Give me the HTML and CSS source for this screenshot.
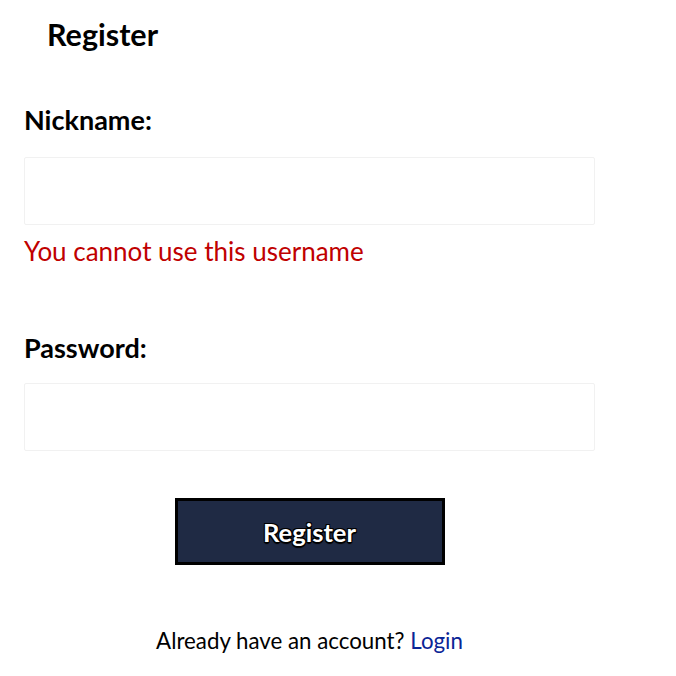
FILE: index.html
```html
<!DOCTYPE html>
<html>
<head>
<meta charset="utf-8">
<link rel="stylesheet" href="styles.css">
</head>
<body>
<div class="page">
  <h1 class="title">Register</h1>
  <form class="form">
    <div class="field">
      <label class="label">Nickname:</label>
      <div class="input"></div>
      <div class="error">You cannot use this username</div>
    </div>
    <div class="field pw">
      <label class="label">Password:</label>
      <div class="input"></div>
    </div>
    <div class="actions">
      <button type="button" class="btn">Register</button>
    </div>
    <p class="footer">Already have an account? <a class="link">Login</a></p>
  </form>
</div>
</body>
</html>
```
FILE: styles.css
```css
html, body { margin: 0; padding: 0; background: #fff; }
body { font-family: Lato, "Open Sans", sans-serif; color: #000; }
.page { width: 676px; }
.title {
  margin: 0;
  padding: 14px 0 0 47px;
  font-size: 30.5px;
  font-weight: 700;
  line-height: 40px;
}
.form { padding: 0 81px 0 24px; }
.field { display: flex; flex-direction: column; }
.label {
  margin-top: 51px;
  font-size: 27px;
  font-weight: 700;
  line-height: 30px;
}
.input {
  margin-top: 22px;
  height: 66px;
  border: 1px solid #f1f1f1;
  border-radius: 2px;
}
.error {
  margin-top: 11px;
  font-size: 26px;
  color: #c00000;
  line-height: 30px;
}
.pw .label { margin-top: 67px; }
.pw .input { margin-top: 20px; }
.actions { display: flex; justify-content: center; margin-top: 47px; }
.btn {
  width: 270px;
  height: 67px;
  background: #1f2a44;
  border: 3px solid #000;
  color: #fff;
  font-family: Lato, sans-serif;
  font-size: 25.5px;
  font-weight: 700;
  text-shadow: -1px -1px 0 #000, 1px -1px 0 #000, -1px 1px 0 #000, 1px 1px 0 #000, 0 2px 1px #000;
  cursor: pointer;
}
.footer {
  margin: 61px 0 0;
  text-align: center;
  font-size: 22.3px;
  line-height: 30px;
}
.link { color: #0a2596; }
```
